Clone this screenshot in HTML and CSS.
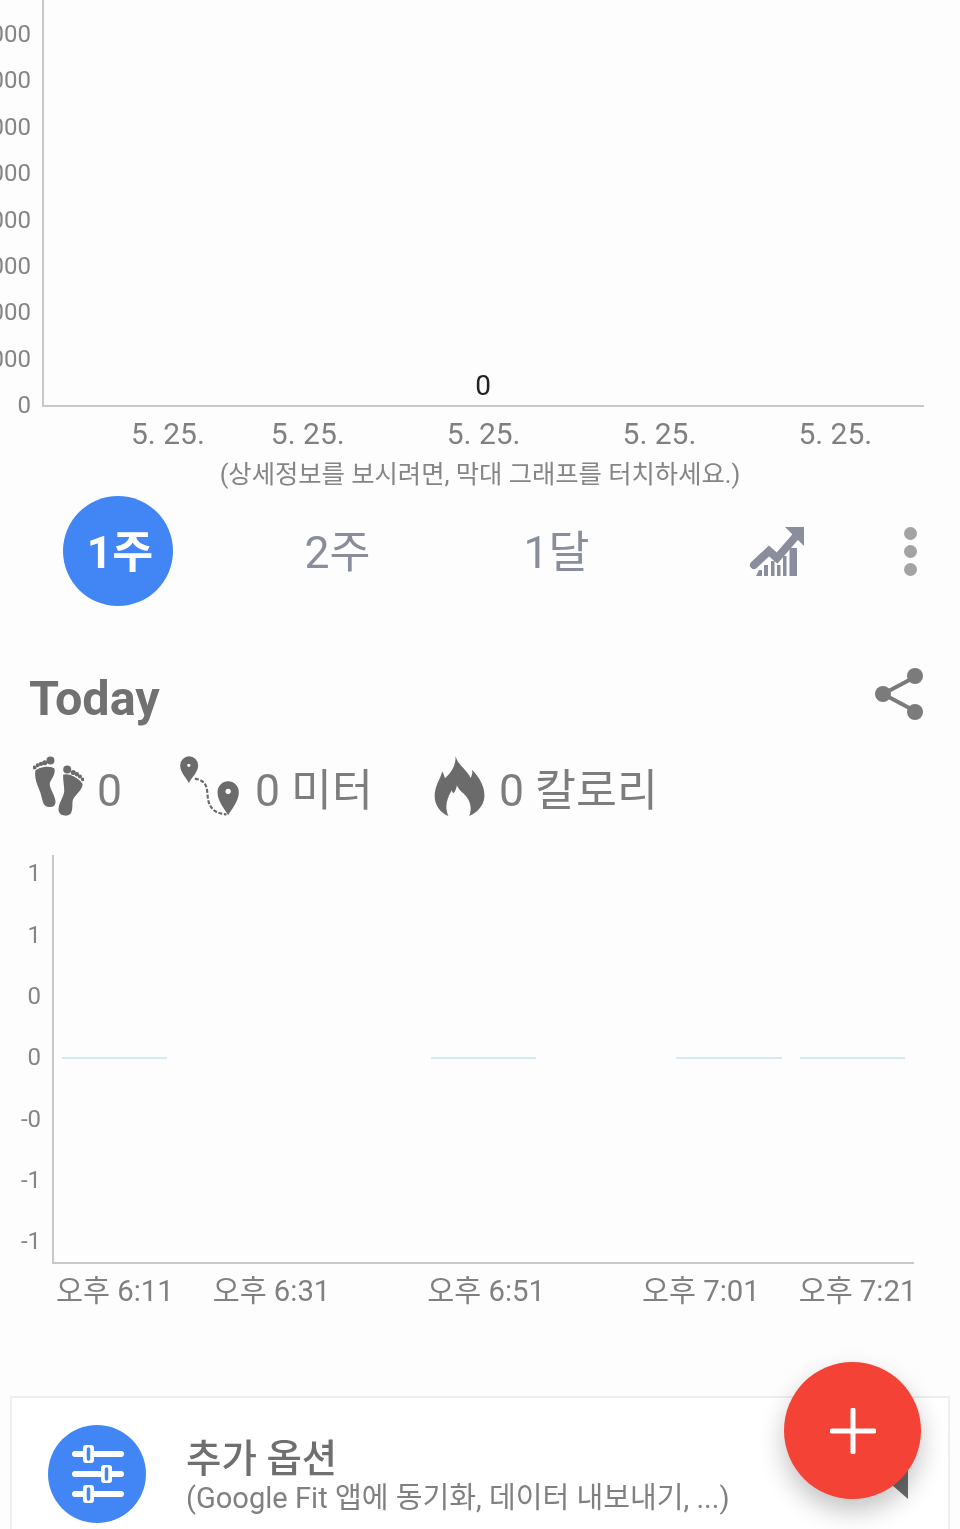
FILE: index.html
```html
<!DOCTYPE html>
<html lang="ko">
<head>
<meta charset="utf-8">
<title>Today</title>
<link rel="stylesheet" href="styles.css">
</head>
<body>
<main class="page">
  <section class="week-chart">
    <div class="y-axis y-axis-week">
      <span>000</span><span>000</span><span>000</span><span>000</span><span>000</span><span>000</span><span>000</span><span>000</span><span>0</span>
    </div>
    <div class="plot-week"><span class="bar-value">0</span></div>
  </section>
  <div class="x-axis-week">
    <span>5. 25.</span><span class="near">5. 25.</span><span>5. 25.</span><span>5. 25.</span><span>5. 25.</span>
  </div>
  <p class="hint">(상세정보를 보시려면, 막대 그래프를 터치하세요.)</p>

  <nav class="tabs">
    <div class="tab"><span class="tab-active">1주</span></div>
    <div class="tab tab-label">2주</div>
    <div class="tab tab-label">1달</div>
    <div class="tab">
      <svg class="trend" viewBox="0 0 56 52" aria-hidden="true">
        <path class="trend-bars" d="M7 50l3-6h3v6zM15 50V39h4v11zM22 50V35h3.500v15zM28 50V39h3.500v11zM34 50V30h3.500v20zM40.500 50V22H48v28z"/>
        <path class="trend-line" d="M5 39 20 25l8 7 20-23"/>
        <path class="trend-head" d="M36 1h19v19z"/>
      </svg>
    </div>
    <div class="tab-more"><i></i><i></i><i></i></div>
  </nav>

  <header class="today-head">
    <h1>Today</h1>
    <svg class="share" viewBox="0 0 48 54" aria-hidden="true">
      <path d="M40 10 8 27l32 17"/>
      <circle cx="40" cy="9" r="8"/><circle cx="8" cy="27" r="8"/><circle cx="40" cy="45" r="8"/>
    </svg>
  </header>

  <div class="stats">
    <svg class="feet" viewBox="98 322 152 178" aria-hidden="true">
      <path d="M107 366c14-11 42-14 53-6 5 16-11 30-14 43-3 16 19 38 17 58-2 14-28 16-34-4-4-20-7-30-15-47-6-14-9-30-7-44z"/>
      <path d="M190 379c17-5 46 12 54 27-2 19-23 30-29 45-4 14 2 31-7 42-10 8-30 5-32-11-1-20 14-34 17-53 1-16-4-34-3-50z"/>
      <circle cx="150" cy="335" r="10"/><circle cx="133" cy="342" r="5.500"/><circle cx="122" cy="345" r="4.500"/><circle cx="112" cy="349" r="4"/><circle cx="103" cy="356" r="4"/>
      <circle cx="200" cy="362" r="10"/><circle cx="218" cy="371" r="5.500"/><circle cx="229" cy="376" r="4.500"/><circle cx="238" cy="383" r="4"/><circle cx="246" cy="391" r="3.500"/>
    </svg>
    <span class="stat-text">0</span>
    <svg class="route" viewBox="542 322 176 180" aria-hidden="true">
      <path class="route-dash" d="M586 390c40 6 36 34 39 58 4 32 24 48 56 49"/>
      <path class="route-pin" fill-rule="evenodd" d="M568 403c-10-18-26-32-26-53a27 27 0 0 1 54 0c0 21-18 35-28 53zm0-58a5 5 0 1 0 0 10 5 5 0 0 0 0-10z"/>
      <path class="route-pin" fill-rule="evenodd" d="M686 500c-12-22-32-42-32-70a32 32 0 0 1 64 0c0 28-20 48-32 70zm0-80a8 8 0 1 0 0 16 8 8 0 0 0 0-16z"/>
    </svg>
    <span class="stat-text">0 미터</span>
    <svg class="flame" viewBox="97 325 145 175" aria-hidden="true">
      <path d="M158 325c6 26 32 38 44 64 4-8 6-16 4-24 22 22 38 50 36 80-2 24-20 44-44 55 10-24 2-52-22-70-6-6-12-14-14-20-2 12-6 18-10 24-3-3-4-5-5-9-14 24-22 48-10 75-22-8-40-30-40-58 0-30 16-48 22-72 4 6 6 12 8 20 18-16 32-36 31-65z"/>
    </svg>
    <span class="stat-text">0 칼로리</span>
  </div>

  <section class="day-chart">
    <div class="y-axis y-axis-day">
      <span>1</span><span>1</span><span>0</span><span>0</span><span>-0</span><span>-1</span><span>-1</span>
    </div>
    <div class="plot-day">
      <i class="seg seg-a"></i><i class="seg seg-b"></i><i class="seg seg-c"></i><i class="seg seg-d"></i>
    </div>
  </section>
  <div class="x-axis-day">
    <span>오후 6:11</span><span class="near">오후 6:31</span><span>오후 6:51</span><span>오후 7:01</span><span class="near">오후 7:21</span>
  </div>

  <article class="card">
    <svg class="options-icon" viewBox="0 0 98 98" aria-hidden="true">
      <circle class="options-bg" cx="49" cy="49" r="49"/>
      <path class="options-line" d="M27 29h46M27 49h46M27 69h46"/>
      <rect class="options-knob" x="35" y="20" width="11" height="18" rx="3"/>
      <rect class="options-knob" x="53" y="40" width="11" height="18" rx="3"/>
      <rect class="options-knob" x="35" y="60" width="11" height="18" rx="3"/>
      <path class="options-slot" d="M40.500 24v10M58.500 44v10M40.500 64v10"/>
    </svg>
    <div class="card-text">
      <h2>추가 옵션</h2>
      <p>(Google Fit 앱에 동기화, 데이터 내보내기, ...)</p>
    </div>
    <span class="card-corner"></span>
  </article>

  <button class="fab" type="button" aria-label="추가">
    <svg viewBox="0 0 46 46" aria-hidden="true"><path d="M23 2v42M2 23h42"/></svg>
  </button>
</main>
</body>
</html>
```
FILE: styles.css
```css
* { box-sizing: border-box; }

html, body {
  margin: 0;
  padding: 0;
}

.page {
  position: relative;
  width: 960px;
  height: 1529px;
  overflow: hidden;
  background: #fdfdfd;
  color: #7b7b7b;
  font-family: Roboto, "Noto Sans CJK KR", sans-serif;
  filter: blur(0.4px);
}

/* Weekly chart */
.week-chart {
  display: flex;
  height: 407px;
}

.y-axis {
  display: flex;
  flex-direction: column;
  align-items: flex-end;
  flex: none;
  font-size: 24px;
  color: #858585;
}

.y-axis span {
  display: block;
  white-space: nowrap;
}

.y-axis-week {
  width: 42px;
  height: 428px;
  padding: 11px 11px 0 0;
}

.y-axis-week span {
  height: 46.400px;
  line-height: 46.400px;
}

.plot-week {
  display: flex;
  justify-content: center;
  align-items: flex-end;
  width: 882px;
  border-left: 2px solid #c8c8c8;
  border-bottom: 2px solid #c8c8c8;
}

.bar-value {
  font-size: 28px;
  line-height: 32px;
  margin: 0 2px 3px 0;
  color: #222;
}

.x-axis-week {
  display: flex;
  gap: 102px;
  height: 42px;
  margin-top: 7px;
  padding-left: 131px;
  font-size: 30px;
  line-height: 40px;
  color: #808080;
}

.x-axis-week span,
.x-axis-day span {
  flex: none;
  white-space: nowrap;
}

.x-axis-week .near {
  margin-left: -36px;
}

.hint {
  margin: 0;
  height: 36px;
  font-size: 25.350px;
  line-height: 36px;
  text-align: center;
  color: #858585;
}

/* Range tabs */
.tabs {
  display: flex;
  align-items: center;
  height: 110px;
  margin-top: 4px;
  padding-left: 8px;
  font-size: 44.500px;
  color: #8a8d9b;
}

.tab {
  display: flex;
  justify-content: center;
  align-items: center;
  flex: none;
  width: 219px;
}

.tab-label {
  padding: 0 0 6px 2px;
}

.tab-active {
  display: flex;
  justify-content: center;
  align-items: center;
  width: 110px;
  height: 110px;
  padding: 0 0 6px 5px;
  border-radius: 50%;
  background: #4285f4;
  color: #fff;
  font-weight: 700;
}

.trend {
  width: 56px;
  height: 52px;
  margin: 2px 0 0 4px;
}

.trend-bars { fill: #8a8d9b; }

.trend-line {
  fill: none;
  stroke: #8a8d9b;
  stroke-width: 8;
  stroke-linecap: round;
  stroke-linejoin: miter;
}

.trend-head { fill: #8a8d9b; }

.tab-more {
  display: flex;
  flex-direction: column;
  gap: 5px;
  margin-left: 20px;
}

.tab-more i {
  display: block;
  width: 13px;
  height: 13px;
  border-radius: 50%;
  background: #a3a3a3;
}

/* Today */
.today-head {
  display: flex;
  justify-content: space-between;
  align-items: center;
  height: 54px;
  margin-top: 61px;
  padding: 0 37px 0 29px;
}

.today-head h1 {
  margin: 0;
  font-size: 48.500px;
  font-weight: 700;
  line-height: 54px;
  color: #717171;
  position: relative;
  top: 5px;
}

.share {
  width: 48px;
  height: 54px;
}

.share path {
  fill: none;
  stroke: #7b7b7b;
  stroke-width: 4;
}

.share circle { fill: #7b7b7b; }

.stats {
  display: flex;
  align-items: flex-start;
  height: 66px;
  margin-top: 35px;
  padding-left: 33px;
}

.stat-text {
  flex: none;
  font-size: 44.500px;
  line-height: 70px;
  color: #7d7d7d;
}

.feet { width: 51px; height: 60px; margin-right: 13px; stroke: #6b6b6b; stroke-width: 4; }
.route { width: 59px; height: 60px; margin: 0 16px 0 58px; }
.flame { width: 53px; height: 60px; margin: 0 13px 0 60px; }

.feet, .route-pin, .flame { fill: #6b6b6b; }

.route-dash {
  fill: none;
  stroke: #6b6b6b;
  stroke-width: 6.500;
  stroke-dasharray: 12 5;
}

/* Daily chart */
.day-chart {
  display: flex;
  height: 409px;
  margin-top: 33px;
}

.y-axis-day {
  width: 52px;
  height: 429px;
  margin-top: -11.600px;
  padding-right: 11px;
}

.y-axis-day span {
  height: 61.300px;
  line-height: 61.300px;
}

.plot-day {
  display: flex;
  align-items: center;
  width: 862px;
  padding-bottom: 1px;
  border-left: 2px solid #c8c8c8;
  border-bottom: 2px solid #c8c8c8;
}

.seg {
  display: block;
  flex: none;
  width: 105px;
  height: 2px;
  background: #d6eaf2;
}

.seg-a { margin-left: 8px; }
.seg-b { margin-left: 264px; }
.seg-c { margin-left: 140px; width: 106px; }
.seg-d { margin-left: 18px; }

.x-axis-day {
  display: flex;
  gap: 97px;
  height: 40px;
  margin-top: 7px;
  padding-left: 56px;
  font-size: 29.300px;
  line-height: 40px;
  color: #808080;
}

.x-axis-day .near {
  margin-left: -58px;
}

/* Card */
.card {
  position: relative;
  display: flex;
  align-items: flex-start;
  gap: 40px;
  height: 160px;
  margin: 85px 10px 0;
  padding: 27px 0 0 36px;
  background: #fff;
  border: 2px solid #eee;
  border-bottom: 0;
}

.options-icon {
  flex: none;
  width: 98px;
  height: 98px;
}

.options-bg { fill: #4285f4; }

.options-line {
  fill: none;
  stroke: #fff;
  stroke-width: 6;
  stroke-linecap: round;
}

.options-knob { fill: #fff; }

.options-slot {
  fill: none;
  stroke: #4285f4;
  stroke-width: 3.500;
  stroke-linecap: round;
}

.card-text { margin-top: 12px; }

.card-text h2 {
  margin: 0;
  font-size: 38.500px;
  font-weight: 500;
  line-height: 43px;
  color: #6f6f6f;
}

.card-text p {
  margin: 0;
  font-size: 29.100px;
  line-height: 36px;
  color: #808080;
  white-space: nowrap;
}

.card-corner {
  position: absolute;
  top: 71px;
  right: 40px;
  width: 24px;
  height: 30px;
  background: #6b6b6b;
  clip-path: polygon(100% 0, 100% 100%, 0 30%);
}

/* Floating action button */
.fab {
  position: absolute;
  left: 784px;
  top: 1362px;
  display: flex;
  justify-content: center;
  align-items: center;
  width: 137px;
  height: 137px;
  padding: 0;
  border: 0;
  border-radius: 50%;
  background: #f44336;
  box-shadow: 0 12px 26px rgba(0, 0, 0, 0.24);
}

.fab svg {
  width: 46px;
  height: 46px;
}

.fab path {
  fill: none;
  stroke: #fff;
  stroke-width: 5;
  stroke-linecap: round;
}
```
